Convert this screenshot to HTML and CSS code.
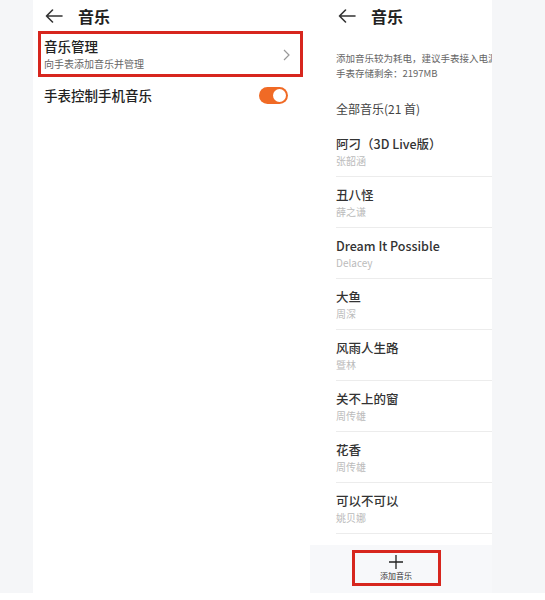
FILE: index.html
```html
<!DOCTYPE html>
<html lang="zh">
<head>
<meta charset="utf-8">
<link rel="stylesheet" href="styles.css">
</head>
<body>
<div class="screen">
  <div class="gutter"></div>
  <section class="left">
    <header class="head">
      <svg class="back" width="18" height="14" viewBox="0 0 18 14"><path d="M17 7H1.5M7.5 1L1.5 7L7.5 13" fill="none" stroke="#333" stroke-width="1.6" stroke-linecap="round" stroke-linejoin="round"/></svg>
      <span class="title">音乐</span>
    </header>
    <div class="manage">
      <div class="manage-text">
        <div class="row-title">音乐管理</div>
        <div class="row-sub">向手表添加音乐并管理</div>
      </div>
      <svg class="chev" width="7" height="12" viewBox="0 0 7 12"><path d="M1 1L6 6L1 11" fill="none" stroke="#999" stroke-width="1.2"/></svg>
    </div>
    <div class="ctrl">
      <span class="row-title">手表控制手机音乐</span>
      <span class="toggle"><span class="knob"></span></span>
    </div>
  </section>
  <section class="right">
    <header class="head head-r">
      <svg class="back" width="18" height="14" viewBox="0 0 18 14"><path d="M17 7H1.5M7.5 1L1.5 7L7.5 13" fill="none" stroke="#333" stroke-width="1.6" stroke-linecap="round" stroke-linejoin="round"/></svg>
      <span class="title">音乐</span>
    </header>
    <div class="content">
      <div class="info">添加音乐较为耗电，建议手表接入电源</div>
      <div class="info">手表存储剩余：2197MB</div>
      <div class="all">全部音乐(21 首)</div>
      <ul class="songs">
        <li><div class="song">阿刁（3D Live版）</div><div class="artist">张韶涵</div></li>
        <li><div class="song">丑八怪</div><div class="artist">薛之谦</div></li>
        <li><div class="song">Dream It Possible</div><div class="artist">Delacey</div></li>
        <li><div class="song">大鱼</div><div class="artist">周深</div></li>
        <li><div class="song">风雨人生路</div><div class="artist">暨林</div></li>
        <li><div class="song">关不上的窗</div><div class="artist">周传雄</div></li>
        <li><div class="song">花香</div><div class="artist">周传雄</div></li>
        <li><div class="song">可以不可以</div><div class="artist">姚贝娜</div></li>
      </ul>
    </div>
    <div class="bar">
      <div class="add">
        <svg width="16" height="16" viewBox="0 0 16 16"><path d="M8 1V15M1 8H15" stroke="#222" stroke-width="1.3"/></svg>
        <span class="add-label">添加音乐</span>
      </div>
    </div>
  </section>
  <div class="gutter gutter-r"></div>
</div>
</body>
</html>
```
FILE: styles.css
```css
* { box-sizing: border-box; }
html, body { margin: 0; padding: 0; background: #fff; }
body { font-family: "Noto Sans CJK SC", "Noto Sans", sans-serif; color: #222; }
.screen { display: flex; height: 593px; overflow: hidden; }
.gutter { width: 33px; background: #f5f6f8; flex: none; }
.gutter-r { flex: 1; width: auto; }
.left { width: 267px; flex: none; background: #fff; position: relative; z-index: 1; }
.head { height: 31px; display: flex; align-items: center; padding-left: 12px; }
.back { flex: none; }
.title { font-size: 16px; font-weight: 700; margin-left: 15px; line-height: 20px; color: #222; }
.manage { width: 265px; height: 46px; margin-left: 5px; border: 3px solid #d7261e; display: flex; align-items: center; justify-content: space-between; padding: 0 10px 0 3px; }
.row-title { font-size: 13.5px; line-height: 18px; color: #222; font-weight: 500; }
.row-sub { font-size: 10px; line-height: 15px; color: #666; margin-top: 1px; }
.chev { margin-top: 2px; }
.ctrl { display: flex; align-items: center; justify-content: space-between; height: 36px; padding: 0 12px 0 11px; }
.toggle { width: 29px; height: 17px; border-radius: 9px; background: #f06a25; position: relative; display: block; }
.knob { position: absolute; right: 2px; top: 2px; width: 13px; height: 13px; border-radius: 50%; background: #fff; }
.right { width: 192px; flex: none; background: #fff; display: flex; flex-direction: column; }
.head-r { padding-left: 38px; }
.content { flex: 1; padding-left: 36px; }
.info { font-size: 9.5px; line-height: 15px; color: #666; white-space: nowrap; overflow: hidden; }
.info:first-child { margin-top: 20px; }
.all { font-size: 12px; line-height: 18px; color: #444; margin-top: 19px; }
.songs { list-style: none; margin: 8px 0 0; padding: 0; }
.songs li { height: 51px; border-bottom: 1px solid #ececec; padding-top: 9px; }
.song { font-size: 12.5px; line-height: 18px; color: #333; white-space: nowrap; font-weight: 500; }
.artist { font-size: 10px; line-height: 16px; color: #bbb; }
.bar { height: 48px; margin-left: 10px; background: #f7f8fa; display: flex; justify-content: center; padding-right: 10px; }
.add { width: 89px; height: 36px; margin-top: 5px; border: 3px solid #d7261e; display: flex; flex-direction: column; align-items: center; padding-top: 1px; }
.add-label { font-size: 8px; line-height: 10px; color: #333; margin-top: 1px; }
```
